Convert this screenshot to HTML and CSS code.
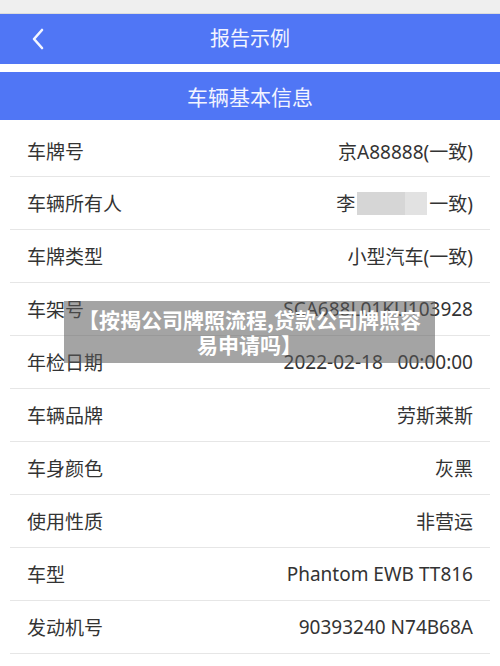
FILE: index.html
```html
<!doctype html>
<html>
  <head>
    <meta charset="utf-8">
    <title>报告示例</title>
    <meta name="viewport" content="width=device-width, initial-scale=1">
    <link rel="stylesheet" href="styles.css">
  </head>
  <body>
    <div class="status"></div>
    <header class="topbar">
      <a class="back">
        <svg viewBox="0 0 16 24" class="back-icon" fill="none" stroke="currentColor">
          <path stroke-width="2.6" stroke-linecap="round" stroke-linejoin="round" d="M12 3L4 12l8 9" />
        </svg>
      </a>
      <h1 class="title">报告示例</h1>
    </header>
    <div class="spacer"></div>
    <h2 class="section-title">车辆基本信息</h2>
    <main class="rows">
      <div class="row first">
        <span class="label">车牌号</span>
        <span class="value">京A88888(一致)</span>
      </div>
      <div class="row">
        <span class="label">车辆所有人</span>
        <span class="value">李<span class="blur"><i class="blur-a"></i><i class="blur-b"></i></span>一致)</span>
      </div>
      <div class="row">
        <span class="label">车牌类型</span>
        <span class="value">小型汽车(一致)</span>
      </div>
      <div class="row">
        <span class="label">车架号</span>
        <span class="value">SCA688L01KU103928</span>
      </div>
      <div class="row">
        <span class="label">年检日期</span>
        <span class="value">2022-02-18&nbsp;&nbsp;&nbsp;00:00:00</span>
      </div>
      <div class="row">
        <span class="label">车辆品牌</span>
        <span class="value">劳斯莱斯</span>
      </div>
      <div class="row">
        <span class="label">车身颜色</span>
        <span class="value">灰黑</span>
      </div>
      <div class="row">
        <span class="label">使用性质</span>
        <span class="value">非营运</span>
      </div>
      <div class="row">
        <span class="label">车型</span>
        <span class="value">Phantom EWB TT816</span>
      </div>
      <div class="row">
        <span class="label">发动机号</span>
        <span class="value">90393240 N74B68A</span>
      </div>
    </main>
    <div class="caption">【按揭公司牌照流程,贷款公司牌照容易申请吗】</div>
  </body>
</html>
```

FILE: styles.css
```css
* {
  margin: 0;
  padding: 0;
  box-sizing: border-box;
  font-size: inherit;
  font-weight: inherit;
}

html, body {
  width: 100%;
  height: 100%;
  overflow: hidden;
}

body {
  background: #fff;
  color: #333;
  font-family: "Noto Sans", "Noto Sans CJK SC", sans-serif;
  font-size: 19px;
  position: relative;
}

.status {
  height: 14px;
  background: #efefef;
  border-bottom: 1px solid #dcdcdc;
}

.topbar {
  height: 50px;
  background: #5076f5;
  color: #f2f4ff;
  display: flex;
  align-items: center;
  justify-content: center;
  position: relative;
}

.back {
  position: absolute;
  left: 30px;
  top: 13px;
  display: block;
  color: #f4f6ff;
}

.back-icon {
  width: 16px;
  height: 24px;
  display: block;
}

.title {
  font-size: 20px;
  line-height: 1;
}

.spacer {
  height: 8px;
  background: #fff;
}

.section-title {
  height: 48px;
  background: #5076f5;
  color: #f2f4ff;
  font-size: 21px;
  display: flex;
  align-items: center;
  justify-content: center;
}

.rows {
  display: flex;
  flex-direction: column;
}

.row {
  height: 53px;
  margin: 0 10px;
  padding: 0 17px 0 17px;
  display: flex;
  align-items: center;
  justify-content: space-between;
  border-bottom: 1px solid #e6e6e6;
}

.row.first {
  height: 57px;
  padding-top: 6px;
}

.label {
  color: #333;
}

.value {
  color: #333;
  display: flex;
  align-items: center;
  white-space: pre;
}

.blur {
  display: flex;
  height: 23px;
  margin: 0 2px 0 2px;
}

.blur i {
  display: block;
  height: 100%;
}

.blur-a {
  width: 48px;
  background: #d6d6d6;
}

.blur-b {
  width: 22px;
  background: #e2e2e2;
}

.caption {
  position: absolute;
  left: 64px;
  top: 301px;
  width: 371px;
  height: 62px;
  padding: 6px 12px;
  background: rgba(90, 90, 90, 0.55);
  color: #fff;
  font-weight: 700;
  font-size: 21px;
  line-height: 25px;
  text-align: center;
  font-family: "Noto Sans CJK SC", sans-serif;
}
```
